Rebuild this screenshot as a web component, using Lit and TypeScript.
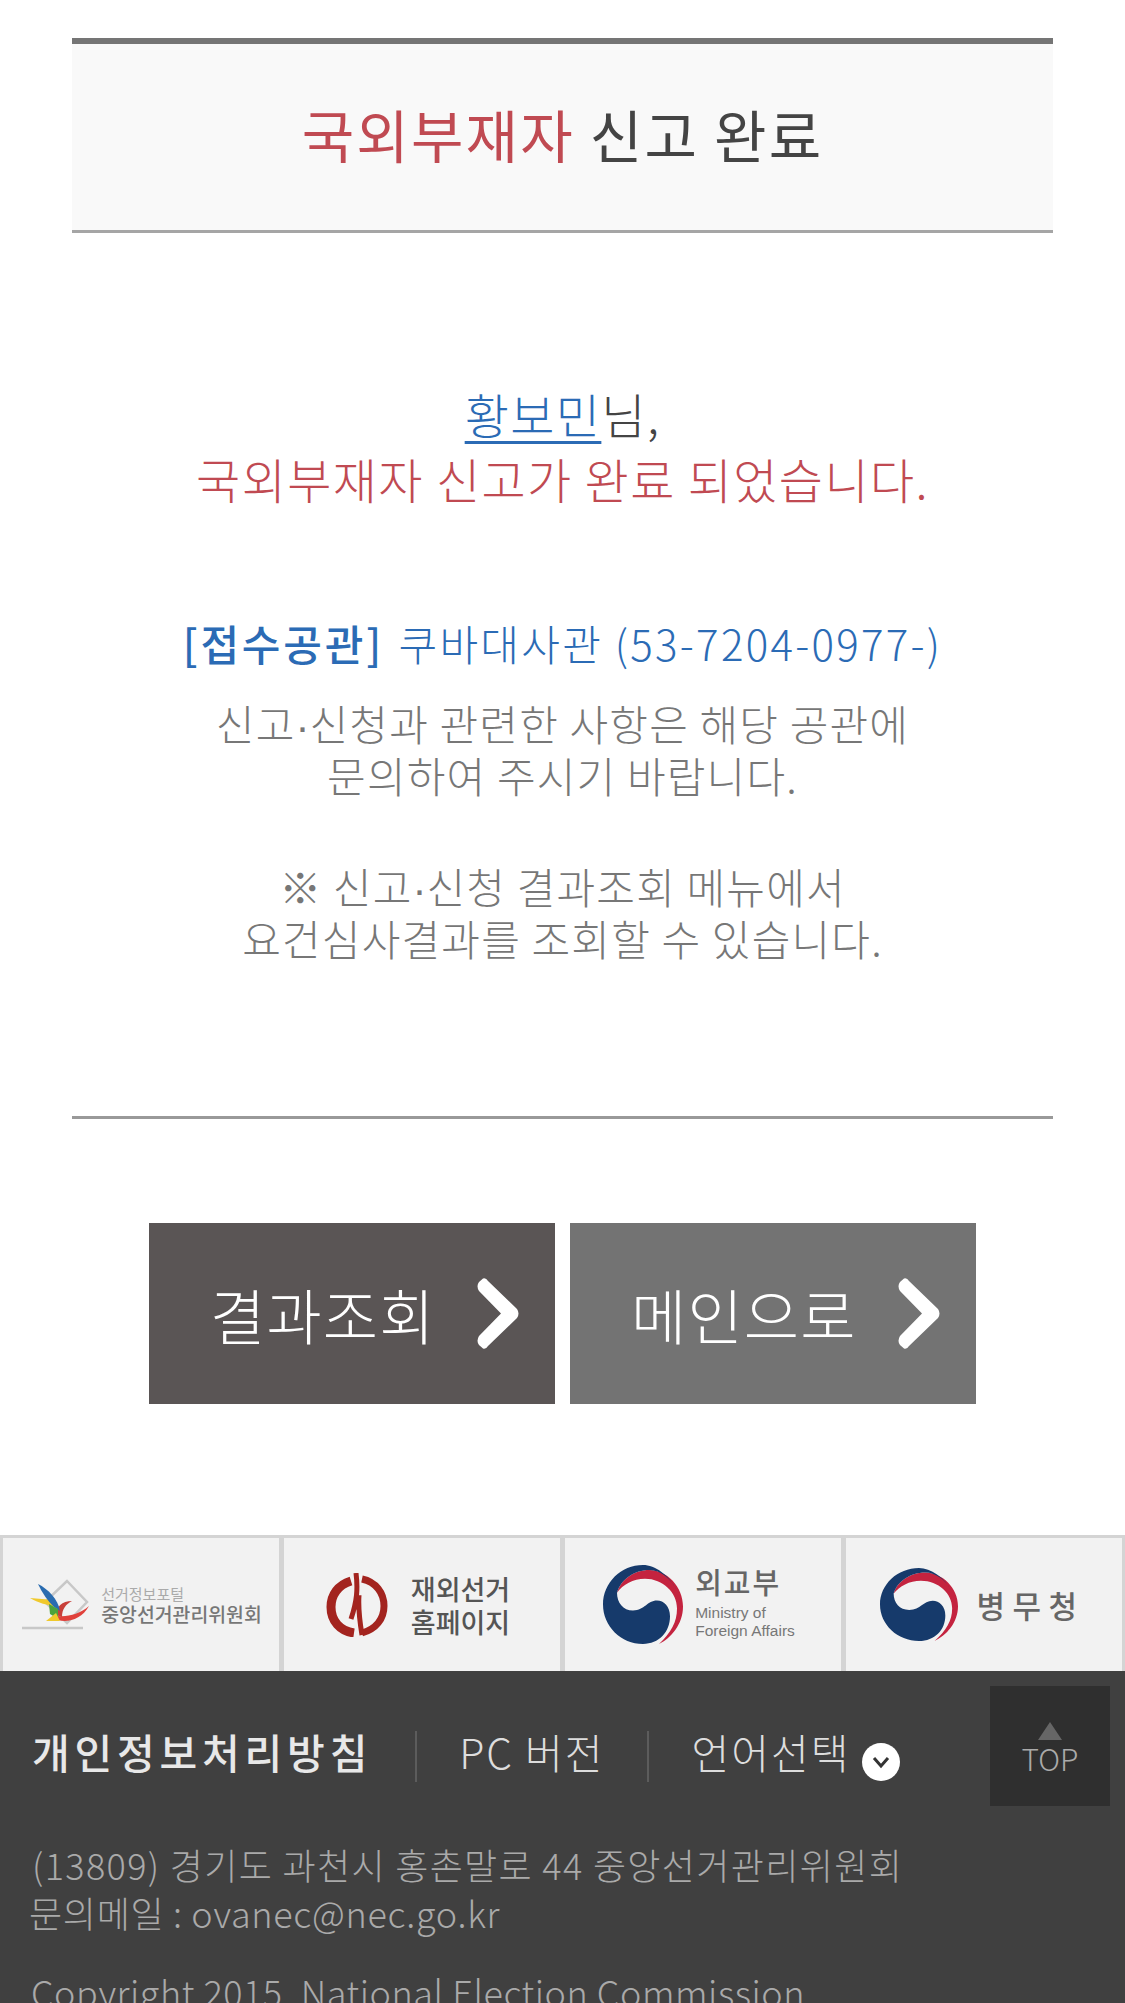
import { LitElement, html, css } from 'lit';
import { customElement } from 'lit/decorators.js';

const chevron = html`<svg class="chev" viewBox="0 0 42 71"><path d="M2 13Q-1 8 2 4L6 .5Q9 -.5 11 3L40 31Q43 35.500 40 40L11 68Q9 71.500 6 70.500L2 67Q-1 63 2 58L24 35.500Z" fill="#fff"/></svg>`;

const taegeuk = html`<svg class="tg" viewBox="0 0 80 80" preserveAspectRatio="none">
    <path d="M14 28C18 14 32 5 46 5C64 5 80 22 80 42C80 60 68 74 56 80C68 68 74 58 74 44C74 28 60 14 42 14C30 14 20 20 14 28Z" fill="#c4233f"/>
    <path d="M74 26C66 10 52 0 40 0C18 0 0 18 0 40C0 62 18 80 40 80C56 80 67 68 67 52C67 42 61 36 54 36C44 36 42 46 30 46C20 46 14 38 14 28C18 14 32 5 46 5C58 5 68 14 74 26Z" fill="#163a6b"/>
</svg>`;

@customElement('app-root')
export class AppRoot extends LitElement {
    static styles = css`
        :host {
            display: block;
            width: 1125px;
            height: 2003px;
            overflow: hidden;
            background: #fff;
            font-family: "Noto Sans CJK KR", "Noto Sans", sans-serif;
            font-weight: 300;
            color: #444;
        }
        .content {
            padding: 38px 72px 0;
        }
        .title {
            display: flex;
            align-items: center;
            justify-content: center;
            box-sizing: border-box;
            height: 195px;
            padding-bottom: 8px;
            border-top: 6px solid #757575;
            border-bottom: 3px solid #a5a5a5;
            background: #f9f9f9;
            font-size: 57px;
            font-weight: 400;
            letter-spacing: 2.200px;
            white-space: pre;
        }
        .red { color: #c04a52; }
        .greeting {
            margin-top: 148px;
            text-align: center;
            font-size: 48px;
            line-height: 65px;
            letter-spacing: 1.400px;
        }
        .greeting a {
            color: #2b6bb5;
            text-decoration: underline 3px #2b6bb5;
            text-underline-offset: 7px;
        }
        .consulate {
            margin-top: 102px;
            text-align: center;
            font-size: 42px;
            line-height: 60px;
            letter-spacing: 2.300px;
            color: #2b6bb5;
        }
        .consulate b { font-weight: 500; letter-spacing: 2.800px; margin-right: 3px; }
        .notes {
            margin-top: 24px;
            text-align: center;
            font-size: 42px;
            line-height: 52px;
            letter-spacing: 1.200px;
            color: #777;
        }
        .notes + .notes { margin-top: 59px; }
        .dot { font-family: "Liberation Sans", sans-serif; letter-spacing: 0; line-height: 0; }
        .rule {
            height: 3px;
            margin-top: 152px;
            background: #999;
        }
        .buttons {
            display: flex;
            justify-content: center;
            gap: 15px;
            margin-top: 104px;
        }
        .btn {
            display: flex;
            align-items: center;
            justify-content: space-between;
            box-sizing: border-box;
            width: 406px;
            height: 181px;
            padding: 0 36px 0 61px;
            color: #fff;
            font-size: 60px;
            letter-spacing: 1.200px;
        }
        .btn.dark { background: #5a5555; }
        .btn.mid { background: #737373; }
        .chev { width: 42px; height: 71px; }
        .logos {
            display: grid;
            grid-template-columns: repeat(4, 1fr);
            gap: 5px;
            margin-top: 131px;
            padding: 3px 3px 0;
            background: #d4d4d4;
        }
        .logo {
            display: flex;
            align-items: center;
            justify-content: center;
            height: 133px;
            background: #f2f2f2;
            color: #666;
            font-weight: 500;
        }
        .logo .txt { line-height: 1; }
        .nec { gap: 11px; }
        .nec svg { width: 70px; height: 52px; }
        .nec small { display: block; font-size: 15px; font-weight: 400; color: #aaa; margin-bottom: 3px; }
        .nec span { font-size: 19.400px; color: #777; }
        .ovs { gap: 22px; padding-right: 8px; }
        .ovs svg { width: 63px; height: 64px; }
        .ovs .txt { font-size: 27px; line-height: 33px; color: #555; }
        .tg { width: 80px; height: 79px; flex: none; }
        .mofa { gap: 12px; padding-right: 8px; }
        .mofa .txt { margin-bottom: 6px; }
        .mofa .big { font-size: 29px; letter-spacing: 2px; line-height: 34px; color: #666; }
        .mofa .en { font-family: "Liberation Sans", sans-serif; font-size: 15.500px; line-height: 18px; font-weight: 400; color: #777; margin-top: 6px; }
        .mma { gap: 18px; padding-right: 3px; }
        .mma .tg { width: 78px; height: 73px; }
        .mma .txt { font-size: 31px; letter-spacing: 7.500px; color: #666; }
        footer {
            position: relative;
            height: 340px;
            background: #404040;
            padding: 0 32px;
            color: #aaa;
        }
        .links {
            display: flex;
            align-items: center;
            padding-top: 55px;
            font-size: 41px;
            line-height: 51px;
            letter-spacing: 2px;
            color: #ddd;
        }
        .links > * { white-space: nowrap; }
        .links b { font-weight: 500; letter-spacing: 4.800px; color: #e8e8e8; }
        .sep {
            width: 2px;
            height: 51px;
            margin: 5px 42px -5px 43px;
            background: #5c5c5c;
        }
        .lang { display: flex; align-items: center; gap: 12px; }
        .lang svg { width: 38px; height: 38px; margin: 10px 0 -10px; }
        .top {
            position: absolute;
            top: 15px;
            right: 15px;
            display: flex;
            flex-direction: column;
            align-items: center;
            width: 120px;
            height: 120px;
            box-sizing: border-box;
            padding-top: 36px;
            background: #2f2f2f;
            color: #aaa;
            font-size: 30px;
            line-height: 36px;
        }
        .top i {
            width: 0;
            height: 0;
            border-left: 12px solid transparent;
            border-right: 12px solid transparent;
            border-bottom: 18px solid #666;
        }
        .addr {
            margin-top: 63px;
            font-size: 36px;
            line-height: 48px;
            letter-spacing: 1.350px;
        }
        .mail { margin-left: -3px; letter-spacing: .7px; }
        .copy {
            margin: 31px 0 0 -1px;
            font-size: 36px;
            line-height: 48px;
            letter-spacing: .55px;
        }
    `;

    render() {
        return html`
            <div class="content">
                <div class="title"><span class="red">국외부재자</span> 신고 완료</div>
                <div class="greeting">
                    <div><a href="#">황보민</a>님,</div>
                    <div class="red">국외부재자 신고가 완료 되었습니다.</div>
                </div>
                <div class="consulate"><b>[접수공관]</b> 쿠바대사관 (53-7204-0977-)</div>
                <div class="notes">신고<span class="dot">·</span>신청과 관련한 사항은 해당 공관에<br>문의하여 주시기 바랍니다.</div>
                <div class="notes">※ 신고<span class="dot">·</span>신청 결과조회 메뉴에서<br>요건심사결과를 조회할 수 있습니다.</div>
                <div class="rule"></div>
                <div class="buttons">
                    <div class="btn dark"><span>결과조회</span>${chevron}</div>
                    <div class="btn mid"><span>메인으로</span>${chevron}</div>
                </div>
            </div>
            <div class="logos">
                <div class="logo nec">
                    <svg viewBox="0 0 70 52">
                        <path d="M47 2L67 23L47 44L25 23Z" fill="none" stroke="#c8c8c8" stroke-width="2.500"/>
                        <path d="M2 49H63" stroke="#c8c8c8" stroke-width="2.500"/>
                        <path d="M38 37C48 38 60 35 69 27C62 40 48 44 38 41Z" fill="#e0403a"/>
                        <path d="M36 36C36 28 42 22 52 22C46 25 42 30 42 38Z" fill="#c8403a"/>
                        <path d="M10 19L34 21L36 28C28 26 18 24 10 19Z" fill="#f0c92c"/>
                        <path d="M18 5C28 10 38 20 40 32L34 28C28 22 22 14 18 5Z" fill="#2a6cb0"/>
                        <path d="M29 25L38 30L38 40L30 35Z" fill="#4ca33c"/>
                        <path d="M26 42L36 34L40 42Z" fill="#f0c92c"/>
                    </svg>
                    <div class="txt"><small>선거정보포털</small><span>중앙선거관리위원회</span></div>
                </div>
                <div class="logo ovs">
                    <svg viewBox="0 0 63 64">
                        <path d="M25 8C12 12 5 22 5 34C5 48 14 58 28 60" fill="none" stroke="#a3241f" stroke-width="9"/>
                        <path d="M36 6C50 9 58 20 58 33C58 46 50 56 36 60" fill="none" stroke="#a3241f" stroke-width="7"/>
                        <path d="M30 0C32 16 31 28 25 46M33 22C32 36 34 50 36 62" fill="none" stroke="#a3241f" stroke-width="5"/>
                    </svg>
                    <div class="txt">재외선거<br>홈페이지</div>
                </div>
                <div class="logo mofa">
                    ${taegeuk}
                    <div class="txt">
                        <div class="big">외교부</div>
                        <div class="en">Ministry of<br>Foreign Affairs</div>
                    </div>
                </div>
                <div class="logo mma">
                    ${taegeuk}
                    <div class="txt">병무청</div>
                </div>
            </div>
            <footer>
                <div class="links">
                    <b>개인정보처리방침</b>
                    <span class="sep"></span>
                    <span>PC 버전</span>
                    <span class="sep"></span>
                    <span class="lang">언어선택
                        <svg viewBox="0 0 38 38"><circle cx="19" cy="19" r="19" fill="#fff"/><path d="M12 15L19 23L26 15" fill="none" stroke="#333" stroke-width="3"/></svg>
                    </span>
                </div>
                <div class="top"><i></i>TOP</div>
                <div class="addr">(13809) 경기도 과천시 홍촌말로 44 중앙선거관리위원회<div class="mail">문의메일 : ovanec@nec.go.kr</div></div>
                <div class="copy">Copyright 2015. National Election Commission</div>
            </footer>
        `;
    }
}
